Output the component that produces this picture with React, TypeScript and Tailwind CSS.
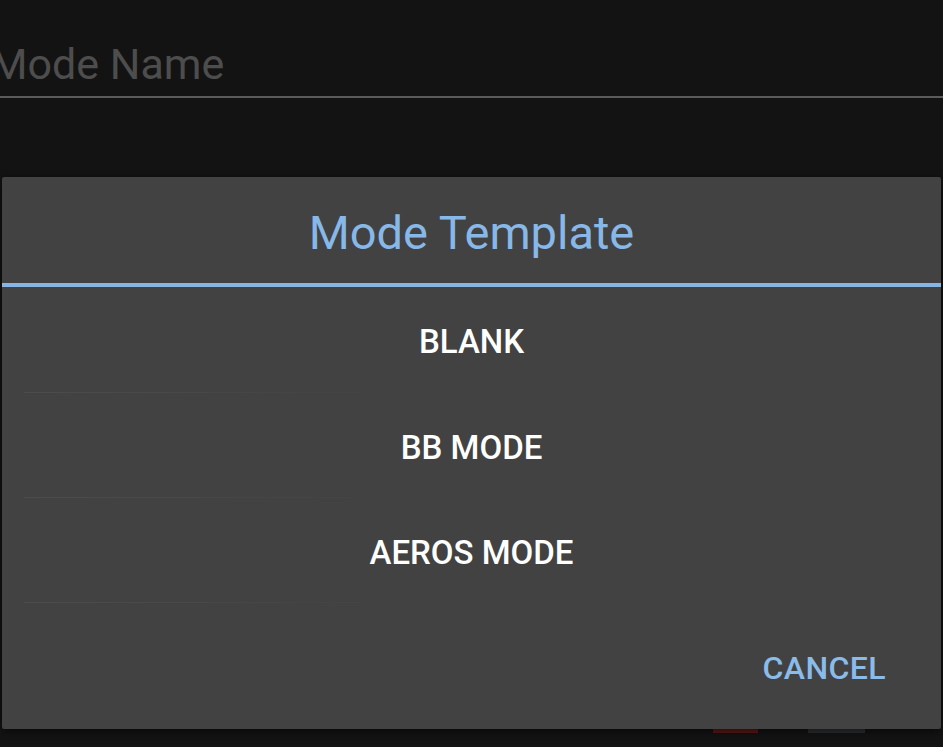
import React from "react";

const templates = ["BLANK", "BB MODE", "AEROS MODE"];

function TemplateDialog() {
  return (
    <div className="absolute left-[2px] top-[177px] w-[939px] h-[552px] bg-[#424242] rounded-[2px] flex flex-col shadow-[0_2px_8px_rgba(0,0,0,0.6)]">
      <div className="h-[106px] flex items-center justify-center pt-[4px]">
        <h2 className="text-[47px] leading-none text-[#87b8e8] font-normal">Mode Template</h2>
      </div>
      <div className="h-[4px] bg-[#88b6e4]" />
      <ul>
        {templates.map((t, i) => (
          <li key={t} className="relative flex items-center justify-center" style={{ height: i === 0 ? 106 : 105 }}>
            <span className="text-[33px] font-medium text-white pt-[4px]">{t}</span>
            <div className="absolute left-[22px] bottom-0 w-[380px] h-px bg-gradient-to-r from-[#4c4c4c] via-[#474747] to-[#424242]" />
          </li>
        ))}
      </ul>
      <div className="flex-1 flex items-center justify-end pr-[55px] pt-[3px]">
        <button className="text-[32px] font-medium text-[#8bbbe9] tracking-[0.4px]">CANCEL</button>
      </div>
    </div>
  );
}

export default function App() {
  return (
    <div
      className="relative w-full h-[747px] overflow-hidden bg-[#131313] flex flex-col"
      style={{ fontFamily: "Roboto, 'Noto Sans', sans-serif" }}
    >
      <div className="pt-[43px]">
        <div className="-ml-[10px] text-[43px] leading-none text-[#4d4d4d]">Mode Name</div>
        <div className="mt-[10px] h-[2px] bg-[#5b5b5b]" />
      </div>
      <div className="flex-1" />
      <div className="h-[18px] flex gap-[50px] pl-[713px]">
        <div className="w-[45px] h-[4px] bg-[#5a1717]" />
        <div className="w-[57px] h-[4px] bg-[#2a2e30]" />
      </div>
      <TemplateDialog />
    </div>
  );
}
